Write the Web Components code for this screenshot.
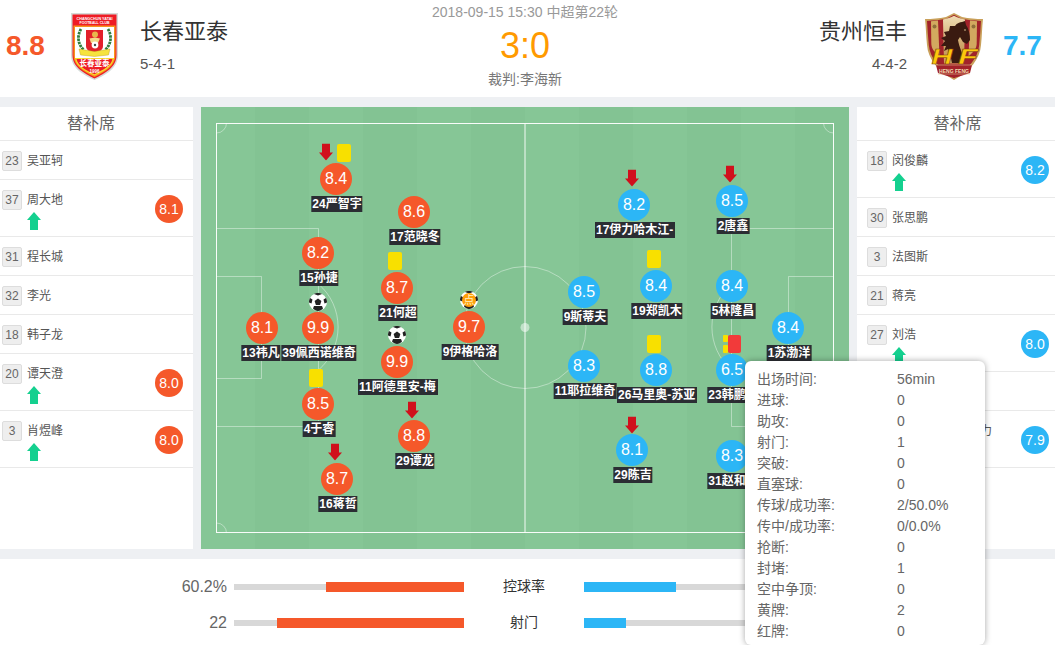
<!DOCTYPE html>
<html lang="zh">
<head>
<meta charset="utf-8">
<title>长春亚泰 3:0 贵州恒丰</title>
<style>
    html, body { margin: 0; height: 645px; overflow: hidden; background: #fff; }
    body { font-family: "Liberation Sans", "Noto Sans CJK SC", sans-serif; color: #333; }
</style>
</head>
<body>
<match-page>
    <match-header></match-header>
    <div slot="main-left">
        <bench-panel>
            <bench-row num="23" name="吴亚轲"></bench-row>
            <bench-row num="37" name="周大地" rating="8.1" team="home" subbed></bench-row>
            <bench-row num="31" name="程长城"></bench-row>
            <bench-row num="32" name="李光"></bench-row>
            <bench-row num="18" name="韩子龙"></bench-row>
            <bench-row num="20" name="谭天澄" rating="8.0" team="home" subbed></bench-row>
            <bench-row num="3" name="肖煜峰" rating="8.0" team="home" subbed></bench-row>
        </bench-panel>
    </div>
    <football-pitch slot="main-pitch"></football-pitch>
    <div slot="main-right">
        <bench-panel side="away">
            <bench-row num="18" name="闵俊麟" rating="8.2" team="away" subbed></bench-row>
            <bench-row num="30" name="张思鹏"></bench-row>
            <bench-row num="3" name="法图斯"></bench-row>
            <bench-row num="21" name="蒋亮"></bench-row>
            <bench-row num="27" name="刘浩" rating="8.0" team="away" subbed></bench-row>
            <bench-row hidden-row></bench-row>
            <bench-row tail="力" rating="7.9" team="away" subbed></bench-row>
        </bench-panel>
    </div>
    <stat-row slot="stats" left="60.2%" home="138" away="92" label="控球率"></stat-row>
    <stat-row slot="stats" left="22" home="187" away="42" label="射门"></stat-row>
    <player-tooltip slot="overlay">
        <tip-row label="出场时间:" value="56min"></tip-row>
        <tip-row label="进球:" value="0"></tip-row>
        <tip-row label="助攻:" value="0"></tip-row>
        <tip-row label="射门:" value="1"></tip-row>
        <tip-row label="突破:" value="0"></tip-row>
        <tip-row label="直塞球:" value="0"></tip-row>
        <tip-row label="传球/成功率:" value="2/50.0%"></tip-row>
        <tip-row label="传中/成功率:" value="0/0.0%"></tip-row>
        <tip-row label="抢断:" value="0"></tip-row>
        <tip-row label="封堵:" value="1"></tip-row>
        <tip-row label="空中争顶:" value="0"></tip-row>
        <tip-row label="黄牌:" value="2"></tip-row>
        <tip-row label="红牌:" value="0"></tip-row>
    </player-tooltip>
</match-page>

<script>
const FONT = '"Liberation Sans", "Noto Sans CJK SC", sans-serif';
const HOME = '#f5582a';
const AWAY = '#2cb6f6';

const shadow = (el, html) => {
    el.attachShadow({ mode: 'open' }).innerHTML = html;
};

class MatchPage extends HTMLElement {
    constructor() {
        super();
        shadow(this, `
            <style>
                :host { display: block; position: relative; height: 645px; overflow: hidden; background: #fff; }
                .main { display: flex; gap: 8px; height: 442px; background: #eef0f3; border-top: 10px solid #eef0f3; border-bottom: 10px solid #eef0f3; }
                .side { width: 193px; background: #fff; }
                .side.right { width: 198px; }
                .pitch { width: 648px; }
                .stats { display: flex; flex-direction: column; gap: 16px; padding-top: 18px; }
                .overlay { position: absolute; left: 745px; top: 361px; }
            </style>
            <slot></slot>
            <div class="main">
                <div class="side"><slot name="main-left"></slot></div>
                <div class="pitch"><slot name="main-pitch"></slot></div>
                <div class="side right"><slot name="main-right"></slot></div>
            </div>
            <div class="stats"><slot name="stats"></slot></div>
            <div class="overlay"><slot name="overlay"></slot></div>
        `);
    }
}

class TeamCrest extends HTMLElement {
    connectedCallback() {
        const home = `
            <svg width="47" height="67" viewBox="0 0 47 67">
                <path d="M0 0h47v42c0 13-12 20-23.500 25C12 62 0 55 0 42z" fill="#d5dbd8"/>
                <path d="M1.500 1.500h44V42c0 12-11 18-22 23.500C12.500 60 1.500 54 1.500 42z" fill="#ee1c25"/>
                <text x="23.500" y="6.800" font-size="4" font-weight="700" fill="#fff" text-anchor="middle" textLength="36" lengthAdjust="spacingAndGlyphs">CHANGCHUN YATAI</text>
                <text x="23.500" y="11.200" font-size="4" font-weight="700" fill="#fff" text-anchor="middle" textLength="30" lengthAdjust="spacingAndGlyphs">FOOTBALL CLUB</text>
                <path d="M2.500 12.500h42v29.500c0 11-10 16.500-21 22C12.500 58.500 2.500 53 2.500 42z" fill="#f7941d"/>
                <path d="M4 14h39v31H4z" fill="#fff"/>
                <path d="M4 45h39c-1 8-9 13-19.500 17.500C13 58 5 53 4 45z" fill="#f8d72b"/>
                <path d="M5.500 46h36c-1.500 7-9 10.500-18 15.300C14.500 57 7 53 5.500 46z" fill="#ee1c25"/>
                <path d="M15 17h17v16c0 4-4 6-8.500 8C19 39 15 37 15 33z" fill="#e2202a"/>
                <path d="M10 16c-4 7-3.500 15 3 21M37 16c4 7 3.500 15-3 21" fill="none" stroke="#2f7d3c" stroke-width="2.800" stroke-dasharray="2.500 .8"/>
                <circle cx="24" cy="21.500" r="3" fill="#e8b64c"/>
                <path d="M18.500 25.500l5.500-1 5 1-2 4.500h-7z" fill="#f3d98b"/>
                <circle cx="24" cy="32" r="3.400" fill="#fff"/>
                <circle cx="24" cy="32" r="1.200" fill="#444"/>
                <path d="M8 36l15.500 2.500L39 36l-1.500 6-14 1.500L9.500 42z" fill="#f6e33d" stroke="#b59b1e" stroke-width=".4"/>
                <text x="23.500" y="53" font-size="7.500" font-weight="700" fill="#fff" text-anchor="middle" font-family='"Noto Sans CJK SC", sans-serif'>长春亚泰</text>
                <text x="23.500" y="59.500" font-size="4.500" font-weight="700" fill="#fff" text-anchor="middle">1996</text>
            </svg>`;
        const away = `
            <svg width="58" height="67" viewBox="0 0 58 67">
                <defs>
                    <linearGradient id="gold" x1="0" y1="0" x2="0" y2="1">
                        <stop offset="0" stop-color="#efdcb4"/><stop offset=".7" stop-color="#c99f5e"/>
                    </linearGradient>
                </defs>
                <path d="M29 0l8 4c7 1.500 14 2 21 2-1 8-1 17-2 26-1 14-11 26-27 35C13 58 3 46 2 32 1 23 1 14 0 6c7 0 14-.500 21-2z" fill="#c9a05a"/>
                <path d="M29 1.800l7.500 4c6 1.200 12 1.800 19.500 2.200-.500 8-1 16-1.800 24C53 45 43.500 56 29 65 14.500 56 5 45 3.800 32 3 24 2.500 16 2 8c7-.400 13-1 19.500-2.200z" fill="#a2222a"/>
                <path d="M6 8.300l7-.900 1.500 36L9 38c-1.500-2-2.500-4-2.700-7z" fill="#d2a95f"/>
                <path d="M52 8.300l-7-.900-1.500 36L49 38c1.500-2 2.500-4 2.700-7z" fill="#d2a95f"/>
                <path d="M18 6.600c4-.800 8-2 11-3.800 3 1.800 7 3 11 3.800l-1 44H19z" fill="url(#gold)"/>
                <circle cx="9.500" cy="13.500" r="2" fill="#8f6f3a"/>
                <circle cx="48.500" cy="13.500" r="2" fill="#8f6f3a"/>
                <path d="M37 9l3-1 1 4c3 4 4 10 4 15l-3 4-4-2-3-5-2 3c1 7 5 13 6 23H27c-1-6-3-10-4-14l-4 2 2-5h-5l4-5-4-3 5-2-2-4 5-1 1-5h5c2-3 5-4 7-4z" fill="#3a1a10"/>
                <circle cx="40" cy="17" r=".8" fill="#e5cc9c"/>
                <text x="17" y="50.500" font-size="22" font-weight="700" font-style="italic" fill="#fdc70c" text-anchor="middle" stroke="#7a3c10" stroke-width=".5" textLength="21" lengthAdjust="spacingAndGlyphs">H</text>
                <text x="43" y="50.500" font-size="22" font-weight="700" font-style="italic" fill="#fdc70c" text-anchor="middle" stroke="#7a3c10" stroke-width=".5" textLength="20" lengthAdjust="spacingAndGlyphs">F</text>
                <path d="M11 52h36l-2 8c-5 2-10 3-16 5-6-2-11-3-16-5z" fill="#a2222a"/>
                <path d="M11 52h36M13 61h32" stroke="#e2c489" stroke-width=".6"/>
                <text x="29" y="60" font-size="5" font-weight="700" fill="#f3dfb1" text-anchor="middle" textLength="30" lengthAdjust="spacingAndGlyphs">HENG FENG</text>
            </svg>`;
        shadow(this, `
            <style>:host { display: block; line-height: 0; }</style>
            ${this.getAttribute('team') === 'away' ? away : home}
        `);
    }
}

class MatchHeader extends HTMLElement {
    constructor() {
        super();
        shadow(this, `
            <style>
                :host { display: flex; height: 97px; font-family: ${FONT}; position: relative; }
                .team { display: flex; align-items: flex-start; }
                .team.home { width: 425px; }
                .team.away { flex: 1; justify-content: flex-end; }
                .score { font-size: 28px; font-weight: 700; line-height: 32px; padding-top: 30px; box-sizing: border-box; }
                .home .score { color: ${HOME}; width: 71px; padding-left: 6px; }
                .away .score { color: ${AWAY}; width: 72px; padding-left: 20px; }
                team-crest { margin-top: 13px; }
                .info { display: flex; flex-direction: column; }
                .home .info { padding-left: 23px; margin-left: -1px; }
                .away .info { padding-right: 17px; align-items: flex-end; margin-right: 1px; }
                .name { font-size: 22px; line-height: 30px; margin-top: 17px; color: #333; }
                .shape { font-size: 15px; line-height: 20px; margin-top: 7px; color: #555; }
                .mid { width: 200px; text-align: center; }
                .when { font-size: 14px; line-height: 16px; margin-top: 4px; color: #999; }
                .result { font-size: 36px; line-height: 42px; margin-top: 5px; color: #ff9a00; }
                .ref { font-size: 14px; line-height: 18px; margin-top: 3px; color: #777; }
            </style>
            <div class="team home">
                <div class="score">8.8</div>
                <team-crest team="home"></team-crest>
                <div class="info"><div class="name">长春亚泰</div><div class="shape">5-4-1</div></div>
            </div>
            <div class="mid">
                <div class="when">2018-09-15 15:30 中超第22轮</div>
                <div class="result">3:0</div>
                <div class="ref">裁判:李海新</div>
            </div>
            <div class="team away">
                <div class="info"><div class="name">贵州恒丰</div><div class="shape">4-4-2</div></div>
                <team-crest team="away"></team-crest>
                <div class="score">7.7</div>
            </div>
        `);
    }
}

class BenchPanel extends HTMLElement {
    connectedCallback() {
        const away = this.getAttribute('side') === 'away';
        shadow(this, `
            <style>
                :host { display: block; font-family: ${FONT}; }
                .title { height: 33px; line-height: 33px; text-align: center; font-size: 16px; color: #666; border-bottom: 1px solid #e9e9e9;
                         padding: ${away ? '0 0 0 3px' : '0 11px 0 0'}; }
            </style>
            <div class="title">替补席</div>
            <slot></slot>
        `);
    }
}

class BenchRow extends HTMLElement {
    connectedCallback() {
        const num = this.getAttribute('num');
        const name = this.getAttribute('name');
        const rating = this.getAttribute('rating');
        const team = this.getAttribute('team');
        const tail = this.getAttribute('tail');
        const subbed = this.hasAttribute('subbed');
        const away = this.closest('bench-panel').getAttribute('side') === 'away';
        shadow(this, `
            <style>
                :host { display: flex; box-sizing: border-box; height: ${subbed ? 57 : 39}px; border-bottom: 1px solid #e9e9e9;
                        padding: 10px ${away ? 6 : 10}px 0 ${away ? 10 : 2}px; position: relative; }
                .left { flex: 1; }
                .top { display: flex; align-items: center; height: 20px; gap: 5px; }
                .num { width: 20px; height: 20px; box-sizing: border-box; border: 1px solid #ddd; border-radius: 2px; background: #eee; color: #666; font-size: 12px; line-height: 18px; text-align: center; }
                .name, .tail { font-size: 12px; line-height: 16px; color: #555; }
                .tail { padding-left: 113px; }
                .arrow { display: block; margin: 2px 0 0 25px; }
                .rate { width: 28px; height: 28px; border-radius: 50%; color: #fff; font-size: 14px; line-height: 28px; text-align: center; align-self: center; margin-top: -9px; background: ${team === 'away' ? AWAY : HOME}; }
            </style>
            <div class="left">
                <div class="top">
                    ${num ? `<div class="num">${num}</div><div class="name">${name}</div>` : ''}
                    ${tail ? `<div class="tail">${tail}</div>` : ''}
                </div>
                ${subbed ? `<svg class="arrow" width="14" height="18" viewBox="0 0 14 18"><path d="M7 0l7 8H11v10H3V8H0z" fill="#14d08f"/></svg>` : ''}
            </div>
            ${rating ? `<div class="rate">${rating}</div>` : ''}
        `);
    }
}

// every spot is [team, shirt + name, rating, circle centre x, y] in page pixels, 201/107 is the pitch corner
const PLAYERS = [
    ['home', '24严智宇', '8.4', 336, 179],
    ['home', '17范晓冬', '8.6', 414, 212],
    ['home', '15孙捷', '8.2', 318, 253],
    ['home', '21何超', '8.7', 397, 288],
    ['home', '9伊格哈洛', '9.7', 469, 327],
    ['home', '13祎凡', '8.1', 260, 328],
    ['home', '39佩西诺维奇', '9.9', 318, 328],
    ['home', '11阿德里安-梅', '9.9', 397, 362],
    ['home', '4于睿', '8.5', 318, 404],
    ['home', '29谭龙', '8.8', 414, 436],
    ['home', '16蒋哲', '8.7', 337, 479],
    ['away', '17伊力哈木江-', '8.2', 634, 205],
    ['away', '2唐鑫', '8.5', 732, 201],
    ['away', '9斯蒂夫', '8.5', 584, 292],
    ['away', '19郑凯木', '8.4', 656, 286],
    ['away', '5林隆昌', '8.4', 732, 286],
    ['away', '1苏渤洋', '8.4', 788, 328],
    ['away', '11耶拉维奇', '8.3', 584, 366],
    ['away', '26马里奥-苏亚', '8.8', 656, 370],
    ['away', '23韩鹏飞', '6.5', 732, 370],
    ['away', '29陈吉', '8.1', 632, 450],
    ['away', '31赵和靖', '8.3', 732, 456],
];

// [type, centre x, y]
const MARKS = [
    ['down', 326, 152], ['yellow', 344, 153],
    ['yellow', 395, 261],
    ['ball', 318, 302],
    ['ball', 397, 335],
    ['penalty', 469, 300],
    ['yellow', 316, 378],
    ['down', 412, 410],
    ['down', 335, 452],
    ['down', 632, 178],
    ['down', 730, 174],
    ['yellow', 654, 259],
    ['yellow', 654, 344],
    ['stack', 732, 344],
    ['down', 632, 425],
];

class FootballPitch extends HTMLElement {
    constructor() {
        super();
        shadow(this, `
            <style>
                :host { display: block; position: relative; width: 648px; height: 442px; overflow: hidden; font-family: ${FONT};
                        background: repeating-linear-gradient(90deg, #86c696 0 54px, #83c393 54px 108px); }
                svg { position: absolute; left: 0; top: 0; }
            </style>
            <svg width="648" height="442" viewBox="0 0 648 442" fill="none">
                <g stroke="#fff" stroke-opacity=".4">
                    <path d="M15.500 169.500H60.500V271.500H15.500"/>
                    <path d="M15.500 121.500H117.500V319.500H15.500"/>
                    <path d="M632.500 169.500H587.500V271.500H632.500"/>
                    <path d="M632.500 121.500H530.500V319.500H632.500"/>
                    <path d="M117.500 177A57 57 0 0 1 117.500 263"/>
                    <path d="M530.500 177A57 57 0 0 0 530.500 263"/>
                    <circle cx="324" cy="220.500" r="61"/>
                    <path d="M15.500 26a10 10 0 0 0 10-10M632.500 26a10 10 0 0 1-10-10M15.500 416a10 10 0 0 1 10 10M632.500 416a10 10 0 0 0-10 10"/>
                </g>
                <rect x="15.500" y="16.500" width="617" height="409" stroke="#fff" stroke-opacity=".95"/>
                <path d="M324 16.500V425.500" stroke="#fff" stroke-opacity=".9"/>
                <circle cx="324" cy="220.500" r="4.500" fill="#fff" fill-opacity=".5"/>
            </svg>
            <div id="spots"></div>
        `);
        const spots = this.shadowRoot.getElementById('spots');
        PLAYERS.forEach(([team, label, rating, x, y]) => {
            const p = document.createElement('pitch-player');
            p.setAttribute('team', team);
            p.setAttribute('label', label);
            p.setAttribute('rating', rating);
            p.style.left = (x - 201) + 'px';
            p.style.top = (y - 107) + 'px';
            spots.appendChild(p);
        });
        MARKS.forEach(([type, x, y]) => {
            const m = document.createElement('pitch-mark');
            m.setAttribute('type', type);
            m.style.left = (x - 201) + 'px';
            m.style.top = (y - 107) + 'px';
            spots.appendChild(m);
        });
    }
}

class PitchPlayer extends HTMLElement {
    connectedCallback() {
        const label = this.getAttribute('label');
        // 13祎凡 sits 2px left of its dot in the original, so the dot gets nudged back
        const nudge = label === '13祎凡' ? 2 : 0;
        shadow(this, `
            <style>
                :host { position: absolute; display: block; width: 0; height: 0; }
                .dot { position: absolute; left: ${nudge - 16}px; top: -16px; width: 32px; height: 32px; border-radius: 50%; text-align: center; color: #fff; font-size: 16px; line-height: 32px; background: ${this.getAttribute('team') === 'away' ? AWAY : HOME}; }
                .label { position: absolute; left: 1px; top: 17px; transform: translateX(-50%); height: 16px; line-height: 16px; padding: 0 1px; background: #2b2d33; color: #fff; font-size: 12px; font-weight: 700; white-space: nowrap; overflow: hidden; box-sizing: border-box; ${label.length >= 8 ? 'width: 80px;' : ''} }
            </style>
            <div class="dot">${this.getAttribute('rating')}</div>
            <div class="label">${label}</div>
        `);
    }
}

class PitchMark extends HTMLElement {
    connectedCallback() {
        const ball = `<svg width="18" height="18" viewBox="0 0 18 18">
            <circle cx="9" cy="9" r="9" fill="#fff"/>
            <path d="M9 5.500l3.400 2.500-1.300 4H6.900L5.600 8z" fill="#222"/>
            <path d="M9 0c-1.500 0-3 .400-4 1l4 1.500L13 1c-1-.600-2.500-1-4-1zM1 5C.200 6.300 0 8 0 9.500l2.500 1L3.500 6.500zM17 5c.800 1.300 1 3 1 4.500l-2.500 1-1-4zM4 15.500c1.500 1.500 3.200 2.500 5 2.500 2 0 3.700-1 5-2.500l-1-2.500H5z" fill="#222"/>
        </svg>`;
        const type = this.getAttribute('type');
        const marks = {
            down: `<svg class="c" width="14" height="17" viewBox="0 0 14 17"><path d="M3 0h8v9h3l-7 8-7-8h3z" fill="#d0101c"/></svg>`,
            yellow: `<div class="c card" style="width:14px;height:18px"></div>`,
            ball: `<div class="c" style="width:18px;height:18px">${ball}</div>`,
            penalty: `<div class="c" style="width:18px;height:18px">${ball}<span class="pen">点</span></div>`,
            stack: `<div class="c stack"><span class="y"></span><span class="y"></span><span class="r"></span></div>`,
        };
        shadow(this, `
            <style>
                :host { position: absolute; display: block; width: 0; height: 0; }
                .c { position: absolute; transform: translate(-50%, -50%); line-height: 0; }
                .card { background: #f8e000; border-radius: 2px; }
                .pen { position: absolute; left: 2px; top: 2px; width: 14px; height: 14px; border-radius: 50%; background: #ff9f0a; color: #fff3c4; font-size: 11px; line-height: 14px; text-align: center; }
                .stack { left: 0; width: 18px; height: 18px; }
                .stack .y { position: absolute; left: 0; width: 5px; height: 7px; background: #f8e000; border-radius: 1px; }
                .stack .y:nth-child(1) { top: 0; }
                .stack .y:nth-child(2) { top: 10px; height: 8px; }
                .stack .r { position: absolute; left: 5px; top: 0; width: 13px; height: 18px; background: #f23a3a; border-radius: 2px; }
            </style>
            ${marks[type]}
        `);
    }
}

class StatRow extends HTMLElement {
    connectedCallback() {
        shadow(this, `
            <style>
                :host { display: flex; align-items: center; height: 20px; font-family: ${FONT}; }
                .val { width: 227px; text-align: right; font-size: 16px; color: #666; }
                .track { width: 230px; height: 6px; background: #d8d8d8; margin-left: 7px; position: relative; display: flex; }
                .track.l { justify-content: flex-end; }
                .track i { display: block; height: 10px; margin-top: -2px; }
                .track.l i { background: ${HOME}; }
                .track.r { margin-left: 0; }
                .track.r i { background: ${AWAY}; }
                .mid { width: 120px; text-align: center; font-size: 14px; line-height: 20px; margin-top: -3px; color: #333; }
            </style>
            <div class="val">${this.getAttribute('left')}</div>
            <div class="track l"><i style="width:${this.getAttribute('home')}px"></i></div>
            <div class="mid">${this.getAttribute('label')}</div>
            <div class="track r"><i style="width:${this.getAttribute('away')}px"></i></div>
        `);
    }
}

class PlayerTooltip extends HTMLElement {
    constructor() {
        super();
        shadow(this, `
            <style>
                :host { display: block; box-sizing: border-box; width: 240px; height: 284px; padding: 8px 12px 3px; background: #fff; border-radius: 6px; box-shadow: 0 0 6px rgba(0,0,0,.35); font-family: ${FONT}; }
            </style>
            <slot></slot>
        `);
    }
}

class TipRow extends HTMLElement {
    connectedCallback() {
        shadow(this, `
            <style>
                :host { display: flex; height: 21px; line-height: 21px; font-size: 14px; color: #666; }
                .k { width: 140px; }
            </style>
            <div class="k">${this.getAttribute('label')}</div>
            <div>${this.getAttribute('value')}</div>
        `);
    }
}

// children before parents so nothing waits on upgrade order
customElements.define('pitch-player', PitchPlayer);
customElements.define('pitch-mark', PitchMark);
customElements.define('team-crest', TeamCrest);
customElements.define('tip-row', TipRow);
customElements.define('bench-panel', BenchPanel);
customElements.define('bench-row', BenchRow);
customElements.define('stat-row', StatRow);
customElements.define('player-tooltip', PlayerTooltip);
customElements.define('football-pitch', FootballPitch);
customElements.define('match-header', MatchHeader);
customElements.define('match-page', MatchPage);
</script>
</body>
</html>
